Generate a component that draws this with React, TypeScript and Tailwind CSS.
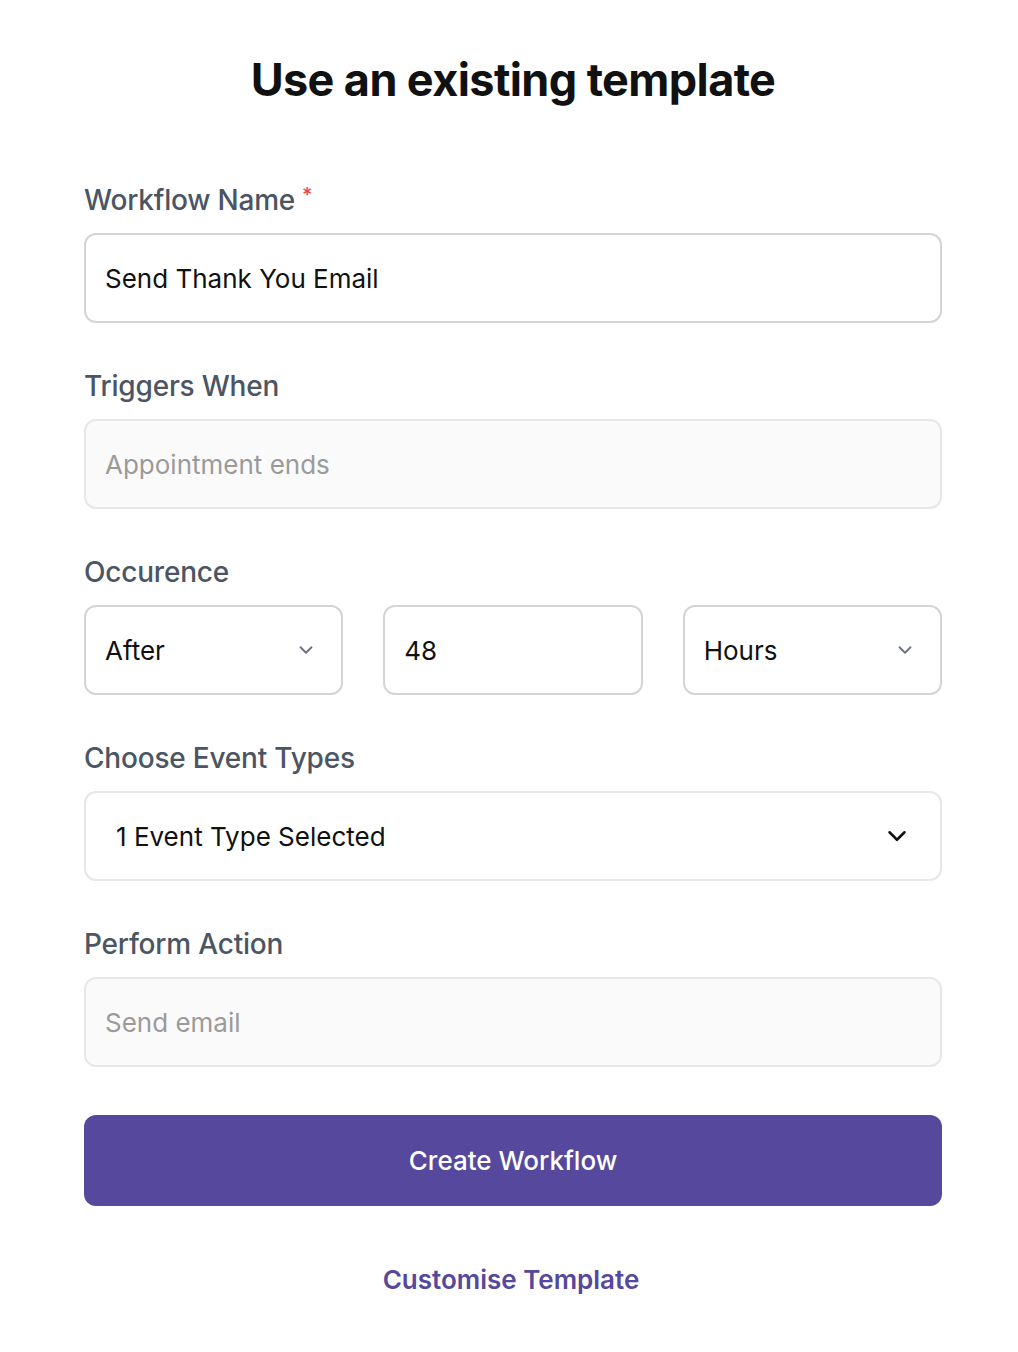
import React from "react";

const Chevron = ({ className }: { className?: string }) => (
  <svg
    viewBox="0 0 24 24"
    fill="none"
    stroke="currentColor"
    strokeWidth={2}
    strokeLinecap="round"
    strokeLinejoin="round"
    className={className}
  >
    <path d="m6 9 6 6 6-6" />
  </svg>
);

const Label = ({ children, required }: { children: React.ReactNode; required?: boolean }) => (
  <div className="text-[28px] leading-[34px] font-medium text-[#4b5563] mb-[16px] flex items-start tracking-[-0.2px]">
    {children}
    {required && <span className="text-[#ef4444] text-[20px] leading-[24px] ml-[7px]">*</span>}
  </div>
);

const boxBase = "h-[90px] rounded-[12px] flex items-center text-[26px]";

export default function App() {
  return (
    <div
      className="min-h-[1352px] bg-white px-[84px] pt-[52px]"
      style={{ fontFamily: "Inter, 'Noto Sans', sans-serif" }}
    >
      <h1 className="text-center text-[45px] leading-[56px] font-bold text-[#111111] tracking-[-0.6px] pl-[8px]">
        Use an existing template
      </h1>

      <div className="mt-[75px] flex flex-col gap-[46px] w-[858px]">
        <div>
          <Label required>Workflow Name</Label>
          <div className={`${boxBase} border-2 border-[#d4d4d8] bg-white px-[19px] text-[#111111]`}>
            Send Thank You Email
          </div>
        </div>

        <div>
          <Label>Triggers When</Label>
          <div className={`${boxBase} border-2 border-[#e5e7eb] bg-[#fafafa] px-[19px] text-[#9a9a9a]`}>
            Appointment ends
          </div>
        </div>

        <div>
          <Label>Occurence</Label>
          <div className="grid grid-cols-3 gap-[40px]">
            <div className={`${boxBase} border-2 border-[#d4d4d8] bg-white pl-[19px] pr-[24px] justify-between text-[#111111]`}>
              <span>After</span>
              <Chevron className="w-[22px] h-[22px] text-[#6b7280]" />
            </div>
            <div className={`${boxBase} border-2 border-[#d4d4d8] bg-white px-[19px] text-[#111111]`}>
              48
            </div>
            <div className={`${boxBase} border-2 border-[#d4d4d8] bg-white pl-[19px] pr-[24px] justify-between text-[#111111]`}>
              <span>Hours</span>
              <Chevron className="w-[22px] h-[22px] text-[#6b7280]" />
            </div>
          </div>
        </div>

        <div>
          <Label>Choose Event Types</Label>
          <div className={`${boxBase} border-2 border-[#e5e7eb] bg-white pl-[30px] pr-[28px] justify-between text-[#111111]`}>
            <span>1 Event Type Selected</span>
            <Chevron className="w-[30px] h-[30px] text-[#111111]" />
          </div>
        </div>

        <div>
          <Label>Perform Action</Label>
          <div className={`${boxBase} border-2 border-[#e5e7eb] bg-[#fafafa] px-[19px] text-[#9a9a9a]`}>
            Send email
          </div>
        </div>
      </div>

      <button className="mt-[48px] w-[858px] h-[91px] rounded-[12px] bg-[#55489d] text-white text-[26px] font-medium">
        Create Workflow
      </button>

      <div className="mt-[54px] text-center text-[26px] font-semibold text-[#55489d] pl-[4px]">
        Customise Template
      </div>
    </div>
  );
}
